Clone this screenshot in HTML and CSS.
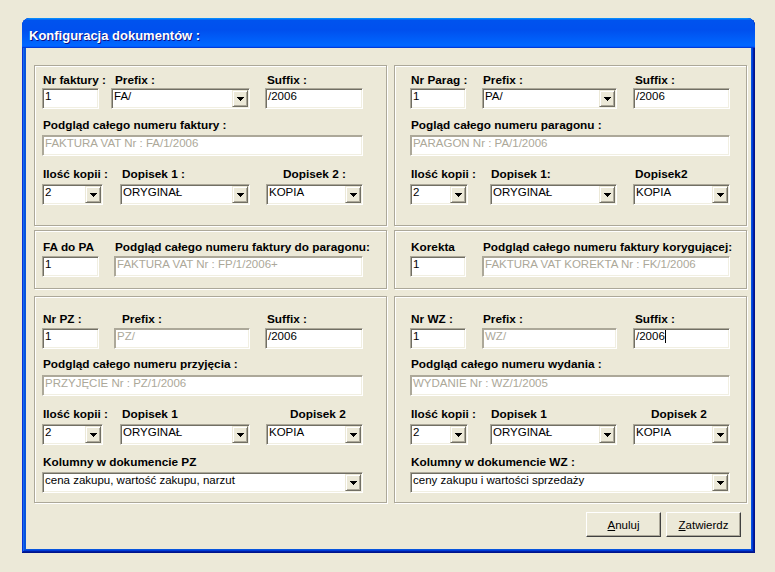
FILE: index.html
```html
<!DOCTYPE html>
<html lang="pl">
<head>
<meta charset="utf-8">
<title>Konfiguracja dokumentów</title>
<link rel="stylesheet" href="styles.css">
</head>
<body>
<div class="window">
  <div class="titlebar"><span class="title">Konfiguracja dokumentów :</span></div>
  <div class="client">
    <div class="groups">

      <!-- top left -->
      <div class="grp grp-l grp-top">
        <div class="row">
          <div class="fld w57"><div class="lbl">Nr faktury :</div><div class="edit c1">1</div></div>
          <div class="fld w139 ml12"><div class="lbl lo4">Prefix :</div><div class="combo c1"><span class="val">FA/</span><span class="dd"><svg width="7" height="4" viewBox="0 0 7 4"><polygon points="0,0 7,0 3.5,4" fill="#000"/></svg></span></div></div>
          <div class="fld w98 ml15"><div class="lbl lo2">Suffix :</div><div class="edit c1">/2006</div></div>
        </div>
        <div class="row r2t">
          <div class="fld w321"><div class="lbl">Podgląd całego numeru faktury :</div><div class="edit dis c3">FAKTURA VAT Nr : FA/1/2006</div></div>
        </div>
        <div class="row r3t">
          <div class="fld w61"><div class="lbl">Ilość kopii :</div><div class="combo c3"><span class="val">2</span><span class="dd"><svg width="7" height="4" viewBox="0 0 7 4"><polygon points="0,0 7,0 3.5,4" fill="#000"/></svg></span></div></div>
          <div class="fld w130 ml17"><div class="lbl lo2">Dopisek 1 :</div><div class="combo c3"><span class="val">ORYGINAŁ</span><span class="dd"><svg width="7" height="4" viewBox="0 0 7 4"><polygon points="0,0 7,0 3.5,4" fill="#000"/></svg></span></div></div>
          <div class="fld w97 ml16"><div class="lbl lo17">Dopisek 2 :</div><div class="combo c3"><span class="val">KOPIA</span><span class="dd"><svg width="7" height="4" viewBox="0 0 7 4"><polygon points="0,0 7,0 3.5,4" fill="#000"/></svg></span></div></div>
        </div>
      </div>

      <!-- top right -->
      <div class="grp grp-r grp-top">
        <div class="row">
          <div class="fld w56"><div class="lbl">Nr Parag :</div><div class="edit c1">1</div></div>
          <div class="fld w135 ml16"><div class="lbl">Prefix :</div><div class="combo c1"><span class="val">PA/</span><span class="dd"><svg width="7" height="4" viewBox="0 0 7 4"><polygon points="0,0 7,0 3.5,4" fill="#000"/></svg></span></div></div>
          <div class="fld w97 ml16"><div class="lbl lo2">Suffix :</div><div class="edit c1">/2006</div></div>
        </div>
        <div class="row r2t">
          <div class="fld w320"><div class="lbl">Pogląd całego numeru paragonu :</div><div class="edit dis c3">PARAGON Nr : PA/1/2006</div></div>
        </div>
        <div class="row r3t">
          <div class="fld w58"><div class="lbl">Ilość kopii :</div><div class="combo c3"><span class="val">2</span><span class="dd"><svg width="7" height="4" viewBox="0 0 7 4"><polygon points="0,0 7,0 3.5,4" fill="#000"/></svg></span></div></div>
          <div class="fld w127 ml22"><div class="lbl">Dopisek 1:</div><div class="combo c3"><span class="val">ORYGINAŁ</span><span class="dd"><svg width="7" height="4" viewBox="0 0 7 4"><polygon points="0,0 7,0 3.5,4" fill="#000"/></svg></span></div></div>
          <div class="fld w97 ml16"><div class="lbl lo2">Dopisek2</div><div class="combo c3"><span class="val">KOPIA</span><span class="dd"><svg width="7" height="4" viewBox="0 0 7 4"><polygon points="0,0 7,0 3.5,4" fill="#000"/></svg></span></div></div>
        </div>
      </div>

      <!-- middle left -->
      <div class="grp grp-l grp-mid">
        <div class="row">
          <div class="fld w57"><div class="lbl">FA do PA</div><div class="edit c2">1</div></div>
          <div class="fld w249 ml15"><div class="lbl">Podgląd całego numeru faktury do paragonu:</div><div class="edit dis c2">FAKTURA VAT Nr : FP/1/2006+</div></div>
        </div>
      </div>

      <!-- middle right -->
      <div class="grp grp-r grp-mid">
        <div class="row">
          <div class="fld w56"><div class="lbl">Korekta</div><div class="edit c2">1</div></div>
          <div class="fld w248 ml16"><div class="lbl">Podgląd całego numeru faktury korygującej:</div><div class="edit dis c2">FAKTURA VAT KOREKTA Nr : FK/1/2006</div></div>
        </div>
      </div>

      <!-- bottom left -->
      <div class="grp grp-l grp-bot">
        <div class="row">
          <div class="fld w57"><div class="lbl">Nr PZ :</div><div class="edit c2">1</div></div>
          <div class="fld w136 ml15"><div class="lbl lo8">Prefix :</div><div class="edit dis c2">PZ/</div></div>
          <div class="fld w98 ml15"><div class="lbl lo2">Suffix :</div><div class="edit c2">/2006</div></div>
        </div>
        <div class="row r2b">
          <div class="fld w321"><div class="lbl">Podgląd całego numeru przyjęcia :</div><div class="edit dis c4">PRZYJĘCIE Nr : PZ/1/2006</div></div>
        </div>
        <div class="row r3b">
          <div class="fld w61"><div class="lbl">Ilość kopii :</div><div class="combo c3"><span class="val">2</span><span class="dd"><svg width="7" height="4" viewBox="0 0 7 4"><polygon points="0,0 7,0 3.5,4" fill="#000"/></svg></span></div></div>
          <div class="fld w130 ml17"><div class="lbl lo2">Dopisek 1</div><div class="combo c3"><span class="val">ORYGINAŁ</span><span class="dd"><svg width="7" height="4" viewBox="0 0 7 4"><polygon points="0,0 7,0 3.5,4" fill="#000"/></svg></span></div></div>
          <div class="fld w97 ml16"><div class="lbl lo24">Dopisek 2</div><div class="combo c3"><span class="val">KOPIA</span><span class="dd"><svg width="7" height="4" viewBox="0 0 7 4"><polygon points="0,0 7,0 3.5,4" fill="#000"/></svg></span></div></div>
        </div>
        <div class="row r4b">
          <div class="fld w321"><div class="lbl">Kolumny w dokumencie PZ</div><div class="combo c3"><span class="val">cena zakupu, wartość zakupu, narzut</span><span class="dd"><svg width="7" height="4" viewBox="0 0 7 4"><polygon points="0,0 7,0 3.5,4" fill="#000"/></svg></span></div></div>
        </div>
      </div>

      <!-- bottom right -->
      <div class="grp grp-r grp-bot">
        <div class="row">
          <div class="fld w56"><div class="lbl">Nr WZ :</div><div class="edit c2">1</div></div>
          <div class="fld w135 ml16"><div class="lbl">Prefix :</div><div class="edit dis c2">WZ/</div></div>
          <div class="fld w97 ml16"><div class="lbl lo2">Suffix :</div><div class="edit c2">/2006<span class="caret"></span></div></div>
        </div>
        <div class="row r2b">
          <div class="fld w320"><div class="lbl">Podgląd całego numeru wydania :</div><div class="edit dis c4">WYDANIE Nr : WZ/1/2005</div></div>
        </div>
        <div class="row r3b">
          <div class="fld w58"><div class="lbl">Ilość kopii :</div><div class="combo c3"><span class="val">2</span><span class="dd"><svg width="7" height="4" viewBox="0 0 7 4"><polygon points="0,0 7,0 3.5,4" fill="#000"/></svg></span></div></div>
          <div class="fld w127 ml22"><div class="lbl">Dopisek 1</div><div class="combo c3"><span class="val">ORYGINAŁ</span><span class="dd"><svg width="7" height="4" viewBox="0 0 7 4"><polygon points="0,0 7,0 3.5,4" fill="#000"/></svg></span></div></div>
          <div class="fld w97 ml16"><div class="lbl lo18">Dopisek 2</div><div class="combo c3"><span class="val">KOPIA</span><span class="dd"><svg width="7" height="4" viewBox="0 0 7 4"><polygon points="0,0 7,0 3.5,4" fill="#000"/></svg></span></div></div>
        </div>
        <div class="row r4b">
          <div class="fld w320"><div class="lbl">Kolumny w dokumencie WZ :</div><div class="combo c3"><span class="val">ceny zakupu i wartości sprzedaży</span><span class="dd"><svg width="7" height="4" viewBox="0 0 7 4"><polygon points="0,0 7,0 3.5,4" fill="#000"/></svg></span></div></div>
        </div>
      </div>

    </div>
    <div class="buttons">
      <div class="btn"><span><u>A</u>nuluj</span></div>
      <div class="btn"><span><u>Z</u>atwierdz</span></div>
    </div>
  </div>
</div>
</body>
</html>
```

FILE: styles.css
```css
html, body {
  margin: 0;
  padding: 0;
}
body {
  background: #ECE9D8;
  font-family: "Liberation Sans", Arial, sans-serif;
  font-size: 11px;
  color: #000;
}

.window {
  margin: 18px 0 0 22px;
  width: 733px;
  height: 535px;
  box-sizing: border-box;
  display: flex;
  flex-direction: column;
  background: #0855DD;
  border-radius: 8px 8px 0 0;
  padding: 0 4px 4px 4px;
  box-shadow: inset -1px -1px #00138c, inset 1px 1px #0831d9,
              inset -2px -2px #001ea0, inset 2px 2px #166aee,
              inset -3px -3px #003bda, inset 3px 3px #0855dd;
}

.titlebar {
  height: 30px;
  margin: 0 -4px;
  box-sizing: border-box;
  padding: 11px 0 0 7px;
  border-radius: 8px 8px 0 0;
  background: linear-gradient(180deg, #0997ff, #0053ee 8%, #0050ee 40%, #06f 88%, #06f 93%, #005bff 95%, #003dd7 96%, #003dd7);
}
.title {
  display: block;
  color: #fff;
  font-family: "Liberation Sans", Arial, sans-serif;
  font-weight: bold;
  font-size: 13px;
  line-height: 13px;
  text-shadow: 1px 1px #0f1089;
  white-space: nowrap;
}

.client {
  flex: 1;
  background: #ECE9D8;
  display: flex;
  flex-direction: column;
}

.groups {
  display: grid;
  grid-template-columns: 353px 353px;
  align-items: start;
  column-gap: 7px;
  padding: 17px 0 0 8px;
}

.grp {
  box-sizing: border-box;
  border: 1px solid #ACA899;
  box-shadow: inset 1px 1px #fff, 1px 1px #fff;
}
.grp-l { padding-left: 7px; }
.grp-r { padding-left: 15px; }
.grp-top { height: 161px; padding-top: 8px; }
.grp-mid { height: 59px; margin-top: 4px; padding-top: 10px; }
.grp-bot { height: 207px; margin-top: 7px; padding-top: 16px; }

.row {
  display: flex;
  align-items: flex-start;
}
.r2t { margin-top: 10px; }
.r3t { margin-top: 12px; }
.r2b { margin-top: 9px; }
.r3b { margin-top: 12px; }
.r4b { margin-top: 11px; }

.fld {
  flex: none;
  display: flex;
  flex-direction: column;
}
.lbl {
  font-family: "Liberation Sans", Arial, sans-serif;
  font-weight: bold;
  font-size: 11.8px;
  line-height: 13px;
  height: 13px;
  white-space: nowrap;
  padding-left: 1px;
}
.lo2 { padding-left: 2px; }
.lo4 { padding-left: 4px; }
.lo8 { padding-left: 8px; }
.lo17 { padding-left: 17px; }
.lo18 { padding-left: 18px; }
.lo24 { padding-left: 24px; }

.c1 { margin-top: 1px; }
.c2 { margin-top: 2px; }
.c3 { margin-top: 3px; }
.c4 { margin-top: 4px; }

.w56 { width: 56px; }
.w57 { width: 57px; }
.w58 { width: 58px; }
.w61 { width: 61px; }
.w97 { width: 97px; }
.w98 { width: 98px; }
.w127 { width: 127px; }
.w130 { width: 130px; }
.w135 { width: 135px; }
.w136 { width: 136px; }
.w139 { width: 139px; }
.w248 { width: 248px; }
.w249 { width: 249px; }
.w320 { width: 320px; }
.w321 { width: 321px; }
.ml12 { margin-left: 12px; }
.ml15 { margin-left: 15px; }
.ml16 { margin-left: 16px; }
.ml17 { margin-left: 17px; }
.ml22 { margin-left: 22px; }

.edit, .combo {
  box-sizing: border-box;
  height: 21px;
  background: #fff;
  border: 1px solid;
  border-color: #ACA899 #fff #fff #ACA899;
  box-shadow: inset 1px 1px #716F64, inset -1px -1px #F1EFE2;
  font-family: "Liberation Sans", Arial, sans-serif;
  font-size: 11.5px;
  line-height: 13px;
  white-space: nowrap;
  overflow: hidden;
}
.edit {
  padding: 1px 2px 0 2px;
}
.dis {
  color: #ACA899;
  box-shadow: inset 1px 1px #ACA899, inset -1px -1px #F1EFE2;
}
.caret {
  display: inline-block;
  width: 1px;
  height: 13px;
  background: #000;
  vertical-align: top;
}

.combo {
  display: flex;
  align-items: flex-start;
  padding: 1px;
}
.combo .val {
  flex: 1;
  padding-left: 1px;
  overflow: hidden;
}
.dd {
  flex: none;
  box-sizing: border-box;
  width: 16px;
  height: 17px;
  background: #ECE9D8;
  border: 1px solid;
  border-color: #ECE9D8 #716F64 #716F64 #ECE9D8;
  box-shadow: inset 1px 1px #fff, inset -1px -1px #ACA899;
  display: flex;
  align-items: center;
  justify-content: center;
}
.dd svg {
  display: block;
  shape-rendering: crispEdges;
}

.buttons {
  display: flex;
  justify-content: flex-end;
  gap: 5px;
  margin-top: 9px;
  padding-right: 10px;
}
.btn {
  box-sizing: border-box;
  width: 75px;
  height: 25px;
  background: #ECE9D8;
  border: 1px solid;
  border-color: #fff #404040 #404040 #fff;
  box-shadow: inset -1px -1px #ACA899;
  display: flex;
  align-items: center;
  justify-content: center;
  font-family: "Liberation Sans", Arial, sans-serif;
  font-size: 11.5px;
  line-height: 13px;
  padding-top: 1px;
}
.btn u {
  text-decoration: underline;
}
```
